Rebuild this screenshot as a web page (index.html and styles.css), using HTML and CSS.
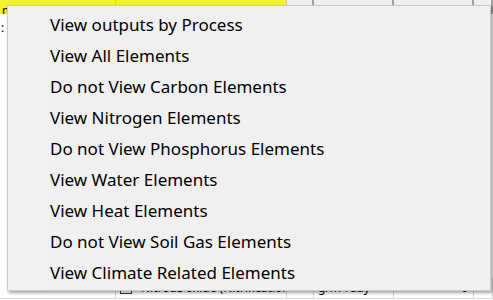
FILE: index.html
```html
<!DOCTYPE html>
<html lang="en">

<head>
    <meta charset="UTF-8">
    <title>Outputs</title>
    <link rel="stylesheet" href="styles.css">
</head>

<body>

    <div class="sheet">
        <div class="row head">
            <div class="cell yellow">m</div>
            <div class="cell yellow">Subprocess</div>
            <div class="cell grey">Sh</div>
            <div class="cell grey">Units</div>
            <div class="cell grey">Initial</div>
            <div class="cell grey"></div>
        </div>
        <div class="filler">
            <span class="colon">:</span>
        </div>
        <div class="row last">
            <div class="cell"></div>
            <div class="cell name"><span class="check"></span>Nitrous oxide (Nitrification</div>
            <div class="cell"></div>
            <div class="cell">g/m²/day</div>
            <div class="cell num">0</div>
            <div class="cell"></div>
        </div>
    </div>

    <div class="menu">
        <div class="menu-item">View outputs by Process</div>
        <div class="menu-item">View All Elements</div>
        <div class="menu-item">Do not View Carbon Elements</div>
        <div class="menu-item">View Nitrogen Elements</div>
        <div class="menu-item">Do not View Phosphorus Elements</div>
        <div class="menu-item">View Water Elements</div>
        <div class="menu-item">View Heat Elements</div>
        <div class="menu-item">Do not View Soil Gas Elements</div>
        <div class="menu-item">View Climate Related Elements</div>
    </div>

</body>

</html>
```

FILE: styles.css
```css
body {
    margin: 0;
    width: 493px;
    height: 300px;
    overflow: hidden;
    background-color: #ffffff;
    font-family: "Noto Sans", "Open Sans", sans-serif;
    position: relative;
}

.sheet {
    display: flex;
    flex-direction: column;
    height: 300px;
}

.row {
    display: grid;
    grid-template-columns: 116px 171px 27px 80px 80px 19px;
    font-size: 12px;
}

.head {
    height: 14px;
    line-height: 14px;
}

.cell {
    border-right: 1px solid #d4d4d4;
    overflow: hidden;
    white-space: nowrap;
    color: #000;
}

.yellow {
    background-color: #f2f230;
    border-right-color: #c8c8c8;
    padding-left: 2px;
}

.grey {
    background-color: #f0f0f0;
    border-right: 2px solid #a0a0a0;
    text-align: center;
}

.head .cell {
    padding-top: 4px;
}

.filler {
    height: 264px;
    font-size: 12px;
}

.colon {
    display: block;
    padding: 8px 0 0 1px;
    line-height: 12px;
}

.last {
    height: 20px;
    line-height: 20px;
    border-bottom: 1px solid #e0e0e0;
}

.name {
    display: flex;
    align-items: center;
    gap: 9px;
    padding-left: 4px;
}

.check {
    width: 10px;
    height: 10px;
    border: 1px solid #333;
    flex-shrink: 0;
}

.last .cell:nth-child(4) {
    padding-left: 4px;
}

.num {
    text-align: right;
    padding-right: 5px;
}

.menu {
    position: absolute;
    left: 7px;
    top: 5px;
    width: 482px;
    padding: 3px 0 2px 0;
    background: linear-gradient(to right, #f2f2f2 38px, #f0f0f0 38px);
    border: 1px solid #cccccc;
    box-shadow: 2px 2px 3px rgba(0, 0, 0, 0.35);
}

.menu-item {
    height: 31px;
    line-height: 31px;
    padding-left: 42px;
    font-size: 17px;
    color: #000;
}
```
